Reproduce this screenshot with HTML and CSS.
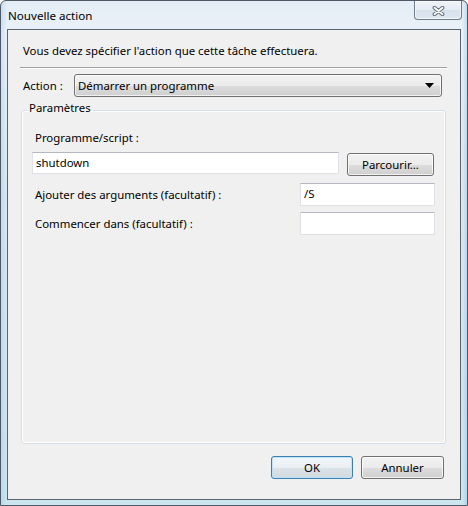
FILE: index.html
```html
<!DOCTYPE html>
<html lang="fr">
<head>
<meta charset="utf-8">
<title>Nouvelle action</title>
<link rel="stylesheet" href="styles.css">
</head>
<body>
<div class="window">
  <div class="titlebar">
    <span class="title">Nouvelle action</span>
    <button class="close" aria-label="Fermer">
      <svg width="13" height="10" viewBox="0 0 13 10">
        <path d="M2.5 1.8 L10.5 8.2 M10.5 1.8 L2.5 8.2" stroke="#5f6b7a" stroke-width="3.8" stroke-linecap="round" fill="none"/>
        <path d="M2.5 1.8 L10.5 8.2 M10.5 1.8 L2.5 8.2" stroke="#ffffff" stroke-width="1.8" stroke-linecap="round" fill="none"/>
      </svg>
    </button>
  </div>
  <div class="client">
    <p class="intro">Vous devez spécifier l'action que cette tâche effectuera.</p>
    <div class="sep"></div>
    <div class="action-row">
      <label class="action-label">Action :</label>
      <div class="combo">
        <span class="combo-text">Démarrer un programme</span>
        <svg class="combo-arrow" width="9" height="5" viewBox="0 0 9 5"><path d="M0 0 H9 L4.5 5 Z" fill="#000"/></svg>
      </div>
    </div>
    <fieldset class="group">
      <legend class="legend">Paramètres</legend>
      <div class="group-body">
        <div class="field-label">Programme/script :</div>
        <div class="prog-row">
          <div class="textbox prog-box">shutdown</div>
          <div class="btn browse">Parcourir...</div>
        </div>
        <div class="opt-row first">
          <span class="opt-label">Ajouter des arguments (facultatif) :</span>
          <div class="textbox opt-box">/S</div>
        </div>
        <div class="opt-row">
          <span class="opt-label">Commencer dans (facultatif) :</span>
          <div class="textbox opt-box"></div>
        </div>
      </div>
    </fieldset>
    <div class="buttons">
      <div class="btn ok">OK</div>
      <div class="btn cancel">Annuler</div>
    </div>
  </div>
</div>
</body>
</html>
```

FILE: styles.css
```css
* { box-sizing: border-box; }

html, body {
  margin: 0;
  padding: 0;
  width: 468px;
  height: 506px;
  overflow: hidden;
  background: #ffffff;
}

body {
  font-family: "Noto Sans", "Open Sans", sans-serif;
  font-size: 11.4px;
  color: #000000;
}

.window {
  width: 468px;
  height: 506px;
  border: 1px solid #4d5966;
  border-radius: 6px 6px 0 0;
  background:
    linear-gradient(90deg, rgba(150,195,230,0.35) 0px, rgba(255,255,255,0) 6px, rgba(255,255,255,0) 461px, rgba(150,195,230,0.45) 466px),
    linear-gradient(180deg, #e4edf6 0%, #eaf1f8 6%, #dbe7f2 40%, #d3e5f0 75%, #cbe6ef 100%);
  display: flex;
  flex-direction: column;
}

.titlebar {
  height: 28px;
  display: flex;
  align-items: flex-start;
  flex: none;
}

.title {
  padding: 7px 0 0 7px;
  line-height: 16px;
  font-size: 11.6px;
  color: #000000;
}

.close {
  margin-left: auto;
  margin-right: 5px;
  width: 48px;
  height: 19px;
  padding: 0;
  border: 1px solid #6e7b8a;
  border-top: none;
  border-radius: 0 0 4px 4px;
  background: linear-gradient(180deg, #eef3f8 0%, #e3ebf3 50%, #d6e1ec 51%, #dfe8f1 100%);
  box-shadow: inset 0 0 0 1px rgba(255,255,255,0.6);
  display: flex;
  align-items: center;
  justify-content: center;
}

.close svg { display: block; margin-top: 1px; }

.client {
  flex: 1;
  margin: 0 6px 5px 6px;
  border: 1px solid #5a646e;
  background: #f0f0f0;
  display: flex;
  flex-direction: column;
}

.intro {
  margin: 13px 0 0 15px;
  line-height: 16px;
}

.sep {
  margin: 8px 13px 0 12px;
  height: 2px;
  border-top: 1px solid #a0a0a0;
  border-bottom: 1px solid #ffffff;
}

.action-row {
  margin-top: 5px;
  height: 23px;
  display: flex;
  align-items: center;
}

.action-label {
  width: 66px;
  padding-left: 15px;
  line-height: 16px;
}

.combo {
  width: 368px;
  height: 23px;
  border: 1px solid #707070;
  border-radius: 3px;
  background: linear-gradient(180deg, #f2f2f2 0%, #ebebeb 50%, #dddddd 51%, #cfcfcf 100%);
  box-shadow: inset 0 0 0 1px rgba(255,255,255,0.7);
  display: flex;
  align-items: center;
  padding: 0 7px 0 3px;
}

.combo-text { flex: 1; line-height: 16px; }

.combo-arrow { display: block; }

.group {
  margin: 3px 14px 0 13px;
  padding: 0;
  height: 344px;
  border: 1px solid #d5dfe5;
  border-radius: 3px;
  box-shadow: inset 0 0 0 1px #ffffff;
  min-width: 0;
}

.legend {
  margin-left: 5px;
  padding: 0 2px 4px 2px;
  line-height: 16px;
}

.group-body {
  padding: 0 10px 0 10px;
  display: flex;
  flex-direction: column;
}

.field-label {
  margin: 10px 0 0 3px;
  line-height: 16px;
}

.prog-row {
  margin-top: 6px;
  display: flex;
  align-items: flex-start;
}

.textbox {
  background: #ffffff;
  border: 1px solid #dfe1e6;
  border-top-color: #b5b8bf;
  padding: 0 3px;
  line-height: 20px;
}

.prog-box {
  width: 307px;
  height: 22px;
}

.btn {
  height: 23px;
  border: 1px solid #707070;
  border-radius: 3px;
  background: linear-gradient(180deg, #f2f2f2 0%, #ebebeb 50%, #dddddd 51%, #cfcfcf 100%);
  box-shadow: inset 0 0 0 1px rgba(255,255,255,0.75);
  display: flex;
  align-items: center;
  justify-content: center;
  line-height: 16px;
}

.browse {
  margin: 1px 0 0 8px;
  width: 87px;
}

.opt-row {
  margin-top: 6px;
  display: flex;
  align-items: center;
  justify-content: space-between;
}

.opt-row.first { margin-top: 7px; }

.opt-label {
  margin-left: 3px;
  line-height: 16px;
}

.opt-box {
  width: 135px;
  height: 23px;
}

.buttons {
  margin-top: 12px;
  padding-right: 16px;
  display: flex;
  justify-content: flex-end;
  gap: 8px;
}

.ok {
  width: 82px;
  border-color: #3c7fb1;
  box-shadow: inset 0 0 0 1px #bfe3f6;
  background: linear-gradient(180deg, #f1f6f9 0%, #e9eff3 50%, #dce3e8 51%, #d1dadf 100%);
}

.cancel {
  width: 83px;
}
```
